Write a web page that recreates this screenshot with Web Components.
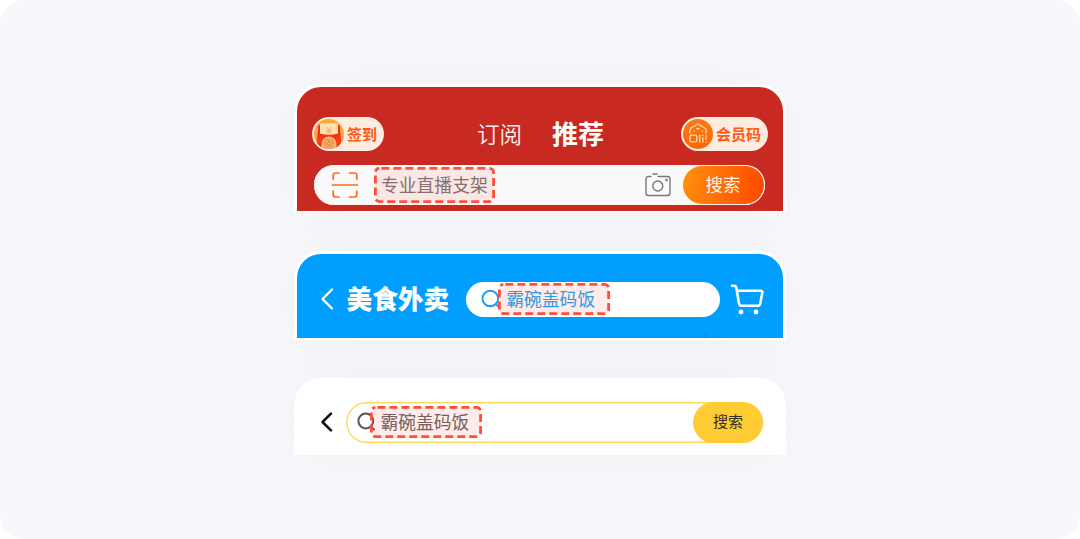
<!DOCTYPE html>
<html lang="zh-CN">
<head>
<meta charset="utf-8">
<title>Search bars</title>
<style>
    body
    {
        margin      : 0;
        background  : #ffffff;
        font-family : "Noto Sans CJK SC", sans-serif;
    }
</style>
</head>
<body>
<search-board>
    <mall-card></mall-card>
    <food-card></food-card>
    <plain-card></plain-card>
</search-board>

<script>
class searchBoard extends HTMLElement
{
    constructor()
    {
        super();
        this.attachShadow({mode:"open"}).innerHTML =
        `
        <style>
            :host
            {
                box-sizing      : border-box;
                display         : flex;
                flex-direction  : column;
                align-items     : center;
                gap             : 38px;
                height          : 539px;
                padding-top     : 84px;
                border-radius   : 24px;
                background      : #f6f8fc;
                overflow        : hidden;
            }

            ::slotted(*)
            {
                box-sizing      : border-box;
                width           : 492px;
                border-radius   : 27px 27px 0 0;
                box-shadow      : 0 0 60px rgba(60, 40, 40, 0.035);
            }
        </style>
        <slot></slot>
        `;
    }
}

// dashed frame round the suggested keyword
class keywordMark extends HTMLElement
{
    constructor()
    {
        super();
        this.attachShadow({mode:"open"});
    }

    connectedCallback()
    {
        const w = Number(this.getAttribute("width"));
        const h = Number(this.getAttribute("height"));
        this.shadowRoot.innerHTML =
        `
        <style>
            :host
            {
                box-sizing  : border-box;
                position    : relative;
                z-index     : 0;
                display     : flex;
                align-items : center;
                flex        : none;
                width       : ${w}px;
                height      : ${h}px;
                padding-left: 8px;
                font-size   : 17.8px;
                line-height : 1;
                white-space : nowrap;
            }

            svg
            {
                position    : absolute;
                inset       : 0;
                z-index     : -1;
            }
        </style>
        <slot></slot>
        <svg width="${w}" height="${h}">
            <rect x="1.4" y="1.4" width="${w - 2.8}" height="${h - 2.8}" rx="4" fill="#ff4d3a" fill-opacity="0.11"
                stroke="#ff4f3b" stroke-width="2.8" stroke-dasharray="8 4" stroke-dashoffset="-2"/>
        </svg>
        `;
    }
}

class badgePill extends HTMLElement
{
    constructor()
    {
        super();
        this.attachShadow({mode:"open"}).innerHTML =
        `
        <style>
            :host
            {
                box-sizing      : border-box;
                display         : flex;
                align-items     : center;
                gap             : 3px;
                height          : 34px;
                padding         : 0 7px 0 2px;
                border-radius   : 17px;
                background      : #ffebdf;
                color           : #ff5a14;
                font-size       : 15px;
                font-weight     : 700;
                line-height     : 1;
                white-space     : nowrap;
            }

            ::slotted(svg)
            {
                display         : block;
                flex            : none;
            }

            .label
            {
                padding-bottom  : 2px;
            }
        </style>
        <slot name="icon"></slot>
        <span class="label"><slot></slot></span>
        `;
    }
}

class mallCard extends HTMLElement
{
    constructor()
    {
        super();
        this.attachShadow({mode:"open"}).innerHTML =
        `
        <style>
            :host
            {
                display         : block;
                height          : 129px;
                padding         : 2.5px 3px;
                background      : #ffffff;
            }

            .panel
            {
                box-sizing      : border-box;
                height          : 124px;
                padding         : 30.5px 15px 0;
                border-radius   : 24px 24px 0 0;
                background      : #c82a21;
            }

            .top
            {
                display         : grid;
                grid-template-columns : 72px 1fr 87px;
                align-items     : center;
                height          : 34px;
            }

            .tabs
            {
                display         : flex;
                align-items     : center;
                gap             : 30px;
                padding         : 0 0 2px 93px;
                color           : #ffffff;
                line-height     : 32px;
            }

            .tab
            {
                font-size       : 22.5px;
                font-weight     : 350;
                opacity         : 0.93;
            }

            .tab-on
            {
                font-size       : 26px;
                font-weight     : 700;
            }

            .search
            {
                box-sizing      : border-box;
                display         : flex;
                align-items     : center;
                height          : 40px;
                margin          : 14px 3px 0 2px;
                padding         : 0 1px 0 17px;
                border-radius   : 20px;
                background      : #fafafa;
                box-shadow      : inset 0 0 0 1px #fff1eb;
            }

            keyword-mark
            {
                margin-left     : 14.5px;
                padding         : 0 0 1px 7.5px;
                color           : #85706f;
            }

            .camera
            {
                margin-left     : auto;
            }

            button
            {
                width           : 81px;
                height          : 38px;
                margin-left     : 12.5px;
                padding         : 0 1px 2px 0;
                border          : 0;
                border-radius   : 19px;
                background      : linear-gradient(100deg, #ff8d0c 5%, #ff4d00 92%);
                color           : #fff4ec;
                font            : 17.5px/1 "Noto Sans CJK SC", sans-serif;
            }
        </style>
        <div class="panel">
            <div class="top">
                <badge-pill>
                    <svg slot="icon" width="30" height="30" viewBox="0 0 30 30">
                        <defs>
                            <clipPath id="coin"><circle cx="15" cy="15" r="15"/></clipPath>
                            <linearGradient id="gold" x2="0" y2="1"><stop stop-color="#ffab35"/><stop offset="1" stop-color="#ff9a48"/></linearGradient>
                            <linearGradient id="packet" x2="0" y2="1"><stop stop-color="#e93218"/><stop offset="0.5" stop-color="#ff3b12"/><stop offset="1" stop-color="#d92b13"/></linearGradient>
                        </defs>
                        <g clip-path="url(#coin)">
                            <rect width="30" height="30" fill="url(#gold)"/>
                            <path d="M4 8q0-2 2-2h18q2 0 2 2v20H4z" fill="#e93218"/>
                            <rect x="6" y="4" width="18" height="12" rx="2" fill="#ffdfae"/>
                            <path d="M3.500 14q11.500 3 23 0l1 16H2.500z" fill="url(#packet)"/>
                            <path d="M6 11h18v3.300q-9 2.500-18 0z" fill="#ffdfae"/>
                            <path d="M7.500 30v-5a7.500 7.500 0 0 1 15 0v5z" fill="#ffb777"/>
                            <path d="M12.500 8l2.500 3 2.500-3M15 11v3.500M12.500 11.300h5M12.500 13h5" fill="none" stroke="#f8ad75" stroke-width="1"/>
                            <path d="M11 29v-8h3.300v3H11M19 29v-8h-3.300v3H19M12.500 26h5M14 25v4M16.300 25v4" fill="none" stroke="#e58443" stroke-width="1"/>
                        </g>
                    </svg>签到</badge-pill>
                <div class="tabs">
                    <span class="tab">订阅</span>
                    <span class="tab-on">推荐</span>
                </div>
                <badge-pill>
                    <svg slot="icon" width="30" height="30" viewBox="0 0 30 30">
                        <defs><linearGradient id="shop" x2="0" y2="1"><stop stop-color="#ff7a12"/><stop offset="1" stop-color="#ff6500"/></linearGradient></defs>
                        <circle cx="15" cy="15" r="15" fill="url(#shop)"/>
                        <g fill="none" stroke="#ffe0bd" stroke-width="1.300" stroke-linecap="round">
                            <path d="M7 14q-1.200-5 4-6.500L15 4.800l4 2.700q5.200 1.500 4 6.500"/>
                            <path d="M11 12.300h.1M19 12.300h.1M14 9.500q1 1 2 0" stroke-width="1.600"/>
                            <rect x="7" y="16.200" width="6.800" height="6.600" rx="1.500"/>
                            <path d="M16.800 16.200v6.800M19.800 16.200v.3M19.800 18.600v4.400M23 16.200v4.300M23 22.900v.1"/>
                        </g>
                    </svg>会员码</badge-pill>
            </div>
            <div class="search">
                <svg width="28" height="28" viewBox="0 0 28 28" fill="none" stroke="#ff6a20" stroke-width="1.700" stroke-linecap="round">
                    <path d="M2.200 8V4.300q0-2.300 2.300-2.300H8M18.500 2h5q2.300 0 2.300 2.300V8M2.200 20v3.700q0 2.300 2.300 2.300H8M18.500 26h5q2.300 0 2.300-2.300V20M1.500 14h25"/>
                </svg>
                <keyword-mark width="121" height="36">专业直播支架</keyword-mark>
                <svg class="camera" width="26" height="24" viewBox="0 0 26 24" fill="none" stroke="#777777" stroke-width="1.400" stroke-linecap="round">
                    <path d="M6 3.500H3.500q-2.500 0-2.500 2.500v14q0 2.500 2.500 2.500h19q2.500 0 2.500-2.500V6q0-2.500-2.500-2.500H13M8 1h4"/>
                    <circle cx="12.800" cy="13" r="5"/>
                    <rect x="20.300" y="5.800" width="2.400" height="2.400" fill="#777777" stroke="none"/>
                </svg>
                <button type="button">搜索</button>
            </div>
        </div>
        `;
    }
}

class foodCard extends HTMLElement
{
    constructor()
    {
        super();
        this.attachShadow({mode:"open"}).innerHTML =
        `
        <style>
            :host
            {
                display         : block;
                height          : 89px;
                padding         : 3px 3px 2.5px;
                background      : #ffffff;
            }

            .panel
            {
                box-sizing      : border-box;
                display         : flex;
                align-items     : center;
                height          : 83.5px;
                padding         : 7px 19px 0 23px;
                border-radius   : 24px 24px 0 0;
                background      : linear-gradient(135deg, transparent 50%, #0094f2 50%) 406px 100% / 5px 8px no-repeat #009eff;
            }

            .title
            {
                margin-left     : 12.5px;
                padding-bottom  : 2px;
                color           : #ffffff;
                font-size       : 25.7px;
                font-weight     : 900;
                line-height     : 1;
                white-space     : nowrap;
            }

            .search
            {
                box-sizing      : border-box;
                display         : flex;
                align-items     : center;
                flex            : none;
                width           : 254.5px;
                height          : 35px;
                margin-left     : 16.5px;
                padding-left    : 15px;
                border-radius   : 18px;
                background      : #ffffff;
            }

            keyword-mark
            {
                margin-left     : -3px;
                padding-left    : 8.5px;
                color           : #3499dc;
            }

            .cart
            {
                margin-left     : auto;
            }
        </style>
        <div class="panel">
            <svg width="14" height="24" viewBox="0 0 14 24" fill="none" stroke="#ffffff" stroke-width="2.400" stroke-linecap="round" stroke-linejoin="round">
                <path d="M12 2.500L2.500 12l9.500 9.500"/>
            </svg>
            <span class="title">美食外卖</span>
            <div class="search">
                <svg width="20" height="20" viewBox="0 0 20 20" fill="none" stroke="#1a9cf5" stroke-width="1.900" stroke-linecap="round">
                    <circle cx="9.300" cy="9.500" r="7.800"/>
                    <path d="M15 15.200l3.200 3.200"/>
                </svg>
                <keyword-mark width="112" height="32">霸碗盖码饭</keyword-mark>
            </div>
            <svg class="cart" width="34" height="32" viewBox="0 0 34 32" fill="none" stroke="#ffffff" stroke-width="2.600" stroke-linecap="round" stroke-linejoin="round">
                <path d="M2 2.800h2q2 0 2.400 2.200L9 20.500q.4 2.300 2.700 2.300h15.800q2 0 2.600-2L32.300 10q.5-2.200-1.800-2.200H7"/>
                <circle cx="11" cy="29" r="2.400" fill="#ffffff" stroke="none"/>
                <circle cx="26" cy="29" r="2.400" fill="#ffffff" stroke="none"/>
            </svg>
        </div>
        `;
    }
}

class plainCard extends HTMLElement
{
    constructor()
    {
        super();
        this.attachShadow({mode:"open"}).innerHTML =
        `
        <style>
            :host
            {
                display         : flex;
                align-items     : center;
                height          : 77px;
                padding         : 11px 23px 0 26px;
                background      : #ffffff;
            }

            .search
            {
                box-sizing      : border-box;
                display         : flex;
                align-items     : center;
                width           : 418px;
                height          : 41px;
                margin-left     : 12px;
                padding-left    : 11px;
                border-radius   : 21px;
                box-shadow      : inset 0 0 0 1.4px #ffd957;
            }

            keyword-mark
            {
                margin-left     : -7px;
                padding-left    : 10.5px;
                color           : #766160;
            }

            button
            {
                width           : 70px;
                height          : 41px;
                margin-left     : auto;
                padding         : 0 0 3px;
                border          : 0;
                border-radius   : 21px;
                background      : #ffcc33;
                color           : #33301f;
                font            : 15px/1 "Noto Sans CJK SC", sans-serif;
            }
        </style>
        <svg width="14" height="22" viewBox="0 0 14 22" fill="none" stroke="#111111" stroke-width="2.600" stroke-linecap="round" stroke-linejoin="round">
            <path d="M11 2.600L2.500 11l8.500 8.400"/>
        </svg>
        <div class="search">
            <svg width="20" height="20" viewBox="0 0 20 20" fill="none" stroke="#555555" stroke-width="2" stroke-linecap="round">
                <circle cx="8.800" cy="9" r="7.400"/>
                <path d="M14 14.500l3 3"/>
            </svg>
            <keyword-mark width="112" height="32">霸碗盖码饭</keyword-mark>
            <button type="button">搜索</button>
        </div>
        `;
    }
}

customElements.define('keyword-mark',keywordMark);
customElements.define('badge-pill',badgePill);
customElements.define('mall-card',mallCard);
customElements.define('food-card',foodCard);
customElements.define('plain-card',plainCard);
customElements.define('search-board',searchBoard);
</script>
</body>
</html>
